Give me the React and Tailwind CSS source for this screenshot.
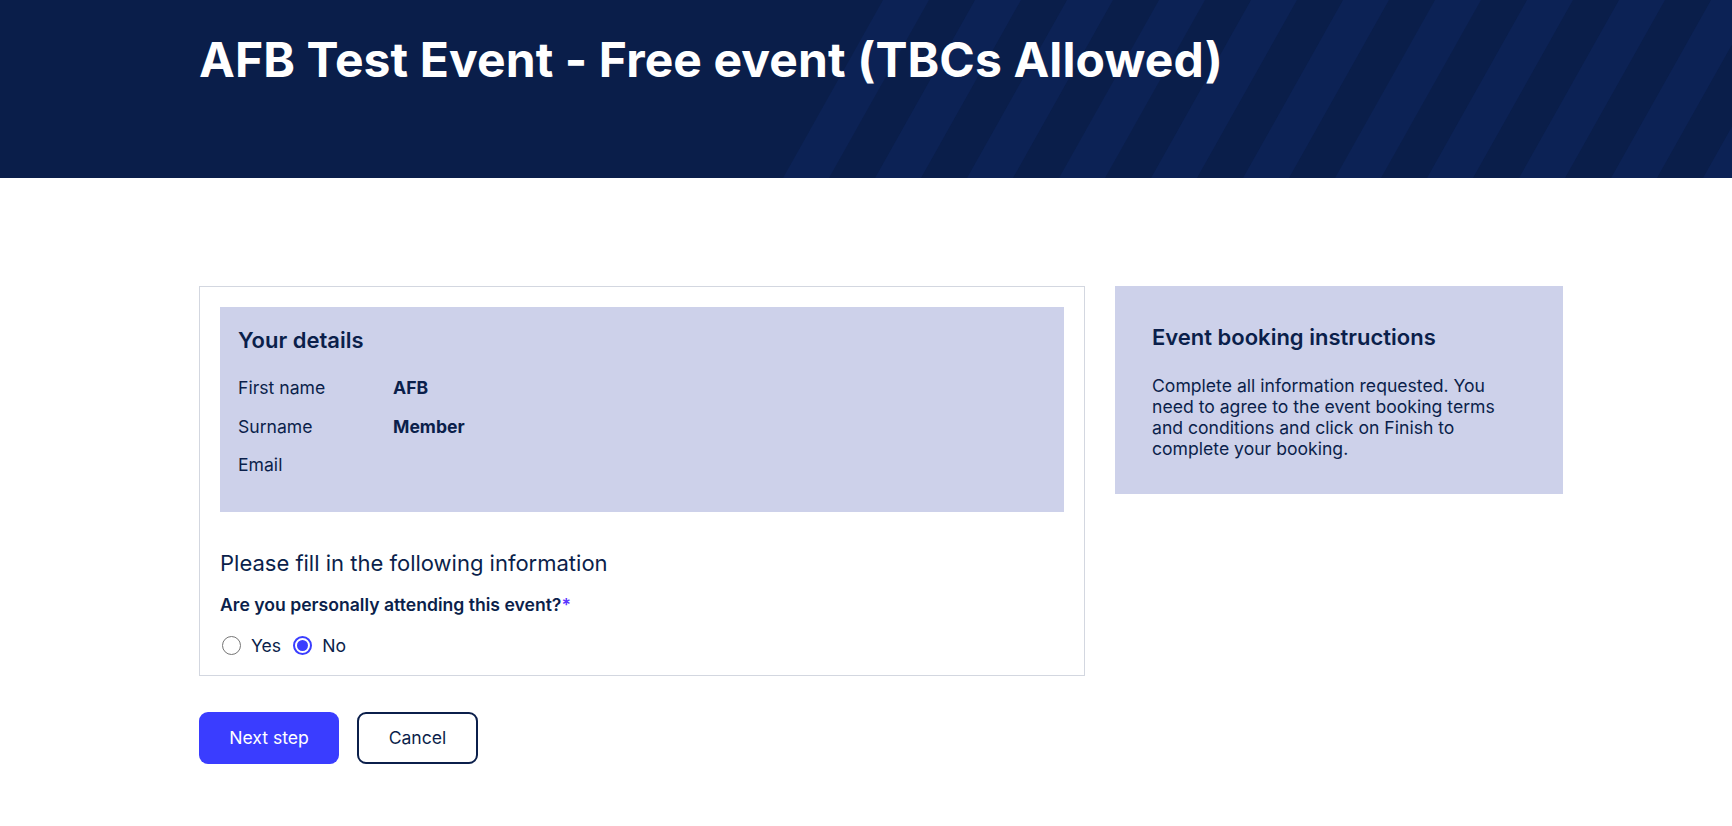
import React from "react";

function Stripes() {
  const polys = [];
  for (let k = 0; k < 11; k++) {
    const t = 883 + 92 * k;
    polys.push(
      <polygon
        key={k}
        points={`${t},0 ${t + 46},0 ${t - 54},178 ${t - 100},178`}
        fill="#0c2255"
      />
    );
  }
  return (
    <svg
      className="absolute inset-0 h-full w-full"
      viewBox="0 0 1732 178"
      preserveAspectRatio="none"
    >
      {polys}
    </svg>
  );
}

function Radio({ checked }) {
  return checked ? (
    <span className="flex h-[19px] w-[19px] items-center justify-center rounded-full border-2 border-[#3a3dff] bg-white">
      <span className="h-[11px] w-[11px] rounded-full bg-[#3a3dff]" />
    </span>
  ) : (
    <span className="h-[19px] w-[19px] rounded-full border-[1.5px] border-[#767676] bg-white" />
  );
}

export default function App() {
  return (
    <div
      className="min-h-[826px] bg-white text-[#0b1f4b]"
      style={{ fontFamily: "Inter, 'Noto Sans', sans-serif" }}
    >
      <header className="relative h-[178px] overflow-hidden bg-[#0a1e4a]">
        <Stripes />
        <h1 className="relative pl-[199px] pt-[31px] text-[48px] font-bold leading-[1.2] tracking-[0.1px] text-white">
          AFB Test Event - Free event (TBCs Allowed)
        </h1>
      </header>

      <main className="pl-[199px] pt-[108px]">
        <div className="flex items-start gap-[30px]">
          <div className="w-[886px]">
            <div className="border border-[#d3d7e0] px-[20px] pb-[16px] pt-[20px]">
              <div className="bg-[#cdd1ea] pb-[33px] pl-[18px] pt-[20px]">
                <h2 className="text-[22px] font-semibold leading-[26.4px]">Your details</h2>
                <div className="mt-[22px] flex flex-col gap-[12px] text-[17.6px] leading-[26.5px]">
                  <div className="flex">
                    <span className="w-[155px]">First name</span>
                    <span className="font-bold">AFB</span>
                  </div>
                  <div className="flex">
                    <span className="w-[155px]">Surname</span>
                    <span className="font-bold">Member</span>
                  </div>
                  <div className="flex">
                    <span className="w-[155px]">Email</span>
                    <span className="font-bold"></span>
                  </div>
                </div>
              </div>

              <p className="mt-[38px] text-[22px] leading-[26.4px]">
                Please fill in the following information
              </p>
              <p className="mt-[16px] text-[17.6px] font-semibold leading-[26.4px]">
                Are you personally attending this event?
                <span className="text-[#5a35ff]">*</span>
              </p>
              <div className="mt-[14px] flex h-[26px] items-center text-[17.6px]">
                <label className="ml-[2px] flex items-center">
                  <Radio />
                  <span className="ml-[10px]">Yes</span>
                </label>
                <label className="ml-[12px] flex items-center">
                  <Radio checked />
                  <span className="ml-[10px]">No</span>
                </label>
              </div>
            </div>

            <div className="mt-[36px] flex gap-[18px] text-[17.6px]">
              <button className="h-[52px] w-[140px] rounded-[9px] bg-[#3a3dff] text-white">
                Next step
              </button>
              <button className="h-[52px] w-[121px] rounded-[9px] border-2 border-[#0b1f4b] bg-white text-[#0b1f4b]">
                Cancel
              </button>
            </div>
          </div>

          <aside className="w-[448px] bg-[#cdd1ea] px-[37px] pb-[35px] pt-[38px]">
            <h2 className="text-[22px] font-semibold leading-[26.4px]">
              Event booking instructions
            </h2>
            <p className="mt-[26px] text-[17.6px] leading-[20.7px]">
              Complete all information requested. You need to agree to the event
              booking terms and conditions and click on Finish to complete your
              booking.
            </p>
          </aside>
        </div>
      </main>
    </div>
  );
}
